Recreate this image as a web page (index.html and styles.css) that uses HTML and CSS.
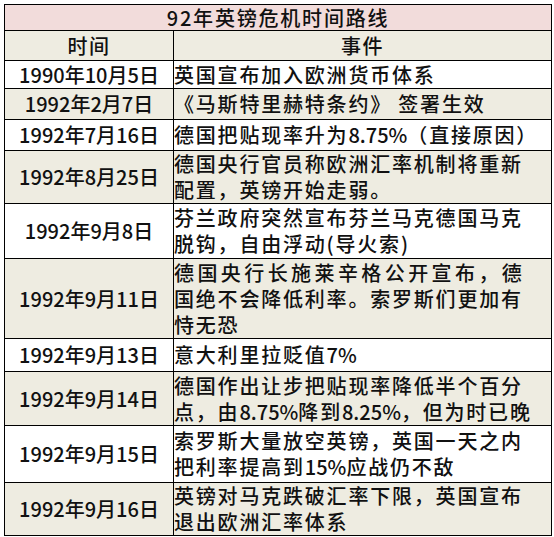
FILE: index.html
```html
<!DOCTYPE html>
<html lang="zh-CN">
<head>
<meta charset="utf-8">
<title>92年英镑危机时间路线</title>
<link rel="stylesheet" href="styles.css">
</head>
<body>
<table class="timeline">
  <colgroup>
    <col class="col-date">
    <col class="col-event">
  </colgroup>
  <thead>
    <tr class="title-row"><th colspan="2">92年英镑危机时间路线</th></tr>
    <tr class="head-row"><th>时间</th><th>事件</th></tr>
  </thead>
  <tbody>
    <tr class="h28"><td class="date">1990年10月5日</td><td class="event">英国宣布加入欧洲货币体系</td></tr>
    <tr class="h31"><td class="date">1992年2月7日</td><td class="event">《马斯特里赫特条约》 签署生效</td></tr>
    <tr class="h31"><td class="date">1992年7月16日</td><td class="event">德国把贴现率升为<span class="num">8.75%</span>（直接原因）</td></tr>
    <tr class="h53"><td class="date">1992年8月25日</td><td class="event">德国央行官员称欧洲汇率机制将重新<br>配置，英镑开始走弱。</td></tr>
    <tr class="h55"><td class="date">1992年9月8日</td><td class="event">芬兰政府突然宣布芬兰马克德国马克<br>脱钩，自由浮动(导火索)</td></tr>
    <tr class="h80"><td class="date">1992年9月11日</td><td class="event"><span class="full">德国央行长施莱辛格公开宣布，德</span>国绝不会降低利率。索罗斯们更加有<br>恃无恐</td></tr>
    <tr class="h33"><td class="date">1992年9月13日</td><td class="event">意大利里拉贬值<span class="num">7%</span></td></tr>
    <tr class="h54"><td class="date">1992年9月14日</td><td class="event">德国作出让步把贴现率降低半个百分<br>点，由<span class="num">8.75%</span>降到<span class="num">8.25%</span>，但为时已晚</td></tr>
    <tr class="h57"><td class="date">1992年9月15日</td><td class="event">索罗斯大量放空英镑，英国一天之内<br>把利率提高到<span class="num">15%</span>应战仍不敌</td></tr>
    <tr class="h52"><td class="date">1992年9月16日</td><td class="event">英镑对马克跌破汇率下限，英国宣布<br>退出欧洲汇率体系</td></tr>
  </tbody>
</table>
</body>
</html>
```

FILE: styles.css
```css
html, body {
  margin: 0;
  padding: 0;
  background: #ffffff;
}

body {
  font-family: "Noto Sans CJK SC", "Noto Sans", sans-serif;
  font-size: 20px;
  font-weight: 500;
  color: #111111;
}

.timeline {
  border-collapse: collapse;
  margin: 4px 0 0 4px;
  width: 547px;
  table-layout: fixed;
  border: 1px solid #000;
}

.col-date { width: 169px; }
.col-event { width: 378px; }

.timeline th,
.timeline td {
  border: 1px solid #000;
  padding: 0;
  font-weight: 500;
  line-height: 26px;
  vertical-align: middle;
}

.title-row { height: 26px; }
.title-row th {
  background: #f2dcdb;
  text-align: center;
  letter-spacing: 1.8px;
  line-height: 24px;
}

.head-row { height: 30px; }
.head-row th {
  background: #eeece1;
  text-align: center;
  letter-spacing: 1.5px;
}

tbody tr:nth-child(odd) { background: #ffffff; }
tbody tr:nth-child(even) { background: #eeece1; }

.h28 { height: 28px; }
.h31 { height: 31px; }
.h33 { height: 33px; }
.h52 { height: 52px; }
.h53 { height: 53px; }
.h54 { height: 54px; }
.h55 { height: 55px; }
.h57 { height: 57px; }
.h80 { height: 80px; }

.date {
  text-align: center;
  white-space: nowrap;
}

.event {
  text-align: left;
  padding-left: 4px;
  letter-spacing: 1.8px;
  white-space: nowrap;
}

.event .num {
  letter-spacing: 0;
}

.event .full {
  display: block;
  width: 349px;
  text-align: justify;
  text-align-last: justify;
  letter-spacing: 1.2px;
}
```
